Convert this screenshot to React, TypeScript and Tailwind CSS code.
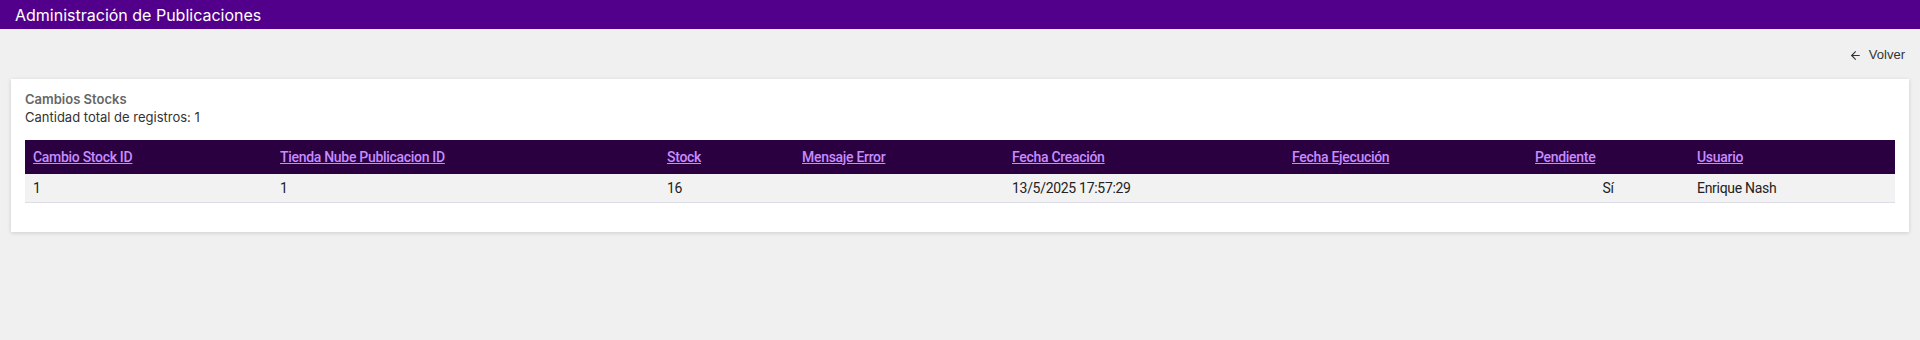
import { ArrowLeft } from 'lucide-react';

const columns = [
  { label: 'Cambio Stock ID', width: 'w-[247px]' },
  { label: 'Tienda Nube Publicacion ID', width: 'w-[387px]' },
  { label: 'Stock', width: 'w-[135px]' },
  { label: 'Mensaje Error', width: 'w-[210px]' },
  { label: 'Fecha Creación', width: 'w-[280px]' },
  { label: 'Fecha Ejecución', width: 'w-[243px]' },
  { label: 'Pendiente', width: 'w-[162px]' },
  { label: 'Usuario', width: 'w-[206px]' },
];

const rows = [
  {
    id: '1',
    publicacion: '1',
    stock: '16',
    error: '',
    creacion: '13/5/2025 17:57:29',
    ejecucion: '',
    pendiente: 'Sí',
    usuario: 'Enrique Nash',
  },
];

export default function App() {
  return (
    <div className="min-h-[340px] bg-[#f0f0f0] font-['Inter','Lato',sans-serif]">
      {/* Top bar */}
      <div className="h-[29px] bg-[#52008c] flex items-center px-[15px]">
        <h1 className="text-white text-[16px] leading-none">Administración de Publicaciones</h1>
      </div>

      <div className="px-[11px]">
        {/* Volver */}
        <div className="flex justify-end h-[50px] items-center pr-[4px] pt-[2px]">
          <button className="flex items-center gap-[7px] text-[#333] text-[13px] font-['Liberation_Sans',sans-serif]">
            <ArrowLeft className="w-[13px] h-[13px]" strokeWidth={2} />
            Volver
          </button>
        </div>

        {/* Card */}
        <div className="bg-white shadow-[0_1px_4px_rgba(0,0,0,0.15)] px-[14px] pt-[11px] pb-[29px]">
          <div className="text-[13px] leading-[18px] font-semibold text-[#666]">Cambios Stocks</div>
          <div className="text-[13px] leading-[18px] text-[#333]">Cantidad total de registros: 1</div>

          <table className="mt-[14px] w-full table-fixed border-collapse font-['Roboto',sans-serif]">
            <thead>
              <tr className="bg-[#2a0040] h-[34px]">
                {columns.map((c) => (
                  <th key={c.label} className={`${c.width} text-left font-medium px-[8px] text-[14px] tracking-[-0.3px]`}>
                    <a href="#" className="text-[#c68cff] underline">{c.label}</a>
                  </th>
                ))}
              </tr>
            </thead>
            <tbody>
              {rows.map((r) => (
                <tr key={r.id} className="bg-[#f2f2f2] h-[28px] border-b border-[#dcdde6] text-[14px] tracking-[-0.3px] text-[#222]">
                  <td className="px-[8px] pt-[2px]">{r.id}</td>
                  <td className="px-[8px] pt-[2px]">{r.publicacion}</td>
                  <td className="px-[8px] pt-[2px]">{r.stock}</td>
                  <td className="px-[8px] pt-[2px]">{r.error}</td>
                  <td className="px-[8px] pt-[2px]">{r.creacion}</td>
                  <td className="px-[8px] pt-[2px]">{r.ejecucion}</td>
                  <td className="px-[8px] pt-[2px] text-center">{r.pendiente}</td>
                  <td className="px-[8px] pt-[2px]">{r.usuario}</td>
                </tr>
              ))}
            </tbody>
          </table>
        </div>
      </div>
    </div>
  );
}
